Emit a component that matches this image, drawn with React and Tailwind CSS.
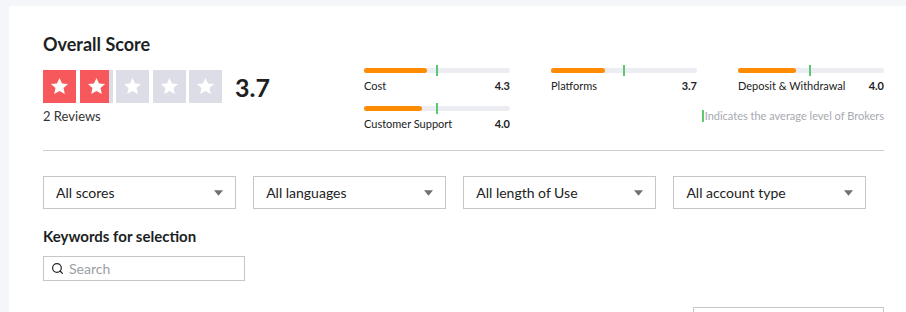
import { Search } from 'lucide-react'

const SCORES = [
  { label: 'Cost', value: '4.3', fill: 43, avg: 49 },
  { label: 'Platforms', value: '3.7', fill: 37, avg: 49 },
  { label: 'Deposit & Withdrawal', value: '4.0', fill: 40, avg: 48.5 },
  { label: 'Customer Support', value: '4.0', fill: 40, avg: 49 },
]

const FILTERS = ['All scores', 'All languages', 'All length of Use', 'All account type']

function Star({ fill }) {
  return (
    <div className="relative w-[33px] h-[33px] bg-[#dcdde7] flex items-center justify-center overflow-hidden">
      <div className="absolute left-0 top-0 h-full bg-[#f6585b]" style={{ width: `${fill}%` }} />
      <svg viewBox="0 0 24 24" className="relative w-[21px] h-[21px]" fill="#fff">
        <path d="M12 2.2l2.9 6.3 6.9.7-5.2 4.6 1.5 6.8L12 17.1l-6.1 3.5 1.5-6.8L2.2 9.2l6.9-.7z" />
      </svg>
    </div>
  )
}

function ScoreBar({ s }) {
  return (
    <div>
      <div className="relative h-[5px] rounded-full bg-[#ebedf3]">
        <div className="absolute left-0 top-0 h-full rounded-full bg-[#ff8c00]" style={{ width: `${s.fill}%` }} />
        <div className="absolute top-[-3px] w-[2px] h-[11px] bg-[#5cc86f]" style={{ left: `${s.avg}%` }} />
      </div>
      <div className="flex justify-between mt-[6px] text-[11px] leading-[14px] text-[#222]">
        <span>{s.label}</span>
        <span className="font-bold">{s.value}</span>
      </div>
    </div>
  )
}

export default function App() {
  return (
    <div className="h-[312px] overflow-hidden bg-[#f5f6fa] pt-[6px] pl-[9px] font-['Lato',sans-serif] text-[#1d1f24]">
      <div className="bg-white h-full pl-[34px] pr-[22px] pt-[27px]">
        {/* Overall score */}
        <div className="flex">
          <div className="w-[321px] shrink-0">
            <div className="text-[18px] leading-[22px] font-bold">Overall Score</div>
            <div className="flex items-center mt-[15px]">
              <div className="flex gap-[3.5px]">
                <Star fill={100} />
                <Star fill={88} />
                <Star fill={0} />
                <Star fill={0} />
                <Star fill={0} />
              </div>
              <span className="ml-[13px] text-[25px] leading-[28px] font-bold">3.7</span>
            </div>
            <div className="mt-[5px] text-[13px] leading-[16px] text-[#333]">2 Reviews</div>
          </div>
          <div className="flex-1 pt-[35px]">
            <div className="grid grid-cols-3 gap-x-[41px] gap-y-[13px]">
              {SCORES.map((s) => (
                <ScoreBar key={s.label} s={s} />
              ))}
              <div className="col-start-3 self-start mt-[3px] flex justify-end items-center whitespace-nowrap text-[11px] leading-[13px] text-[#a6a9b0]">
                <span className="shrink-0 w-[2px] h-[12px] bg-[#5cc86f] mr-[1px]" />
                Indicates the average level of Brokers
              </div>
            </div>
          </div>
        </div>

        <div className="h-px bg-[#cfcfcf] mt-[19px]" />

        {/* Filters */}
        <div className="flex gap-[17.5px] mt-[25px] w-[823px]">
          {FILTERS.map((f) => (
            <div
              key={f}
              className="flex-1 h-[33px] border border-[#c6c6c6] flex items-center justify-between pl-[12px] pr-[12px] text-[14px] text-[#222]"
            >
              <span>{f}</span>
              <svg viewBox="0 0 10 6" className="w-[9px] h-[6px]" fill="#707070">
                <path d="M0 0h10L5 6z" />
              </svg>
            </div>
          ))}
        </div>

        <div className="mt-[17px] text-[15px] leading-[20px] font-bold">Keywords for selection</div>
        <div className="mt-[10px] w-[202px] h-[25px] border border-[#c6c6c6] flex items-center pl-[7px] gap-[5px]">
          <Search size={13} strokeWidth={2.2} className="text-[#222]" />
          <span className="text-[14px] text-[#9b9ea4]">Search</span>
        </div>

        <div className="flex justify-end mt-[26px]">
          <div className="w-[191px] h-[30px] border border-[#c6c6c6]" />
        </div>
      </div>
    </div>
  )
}
